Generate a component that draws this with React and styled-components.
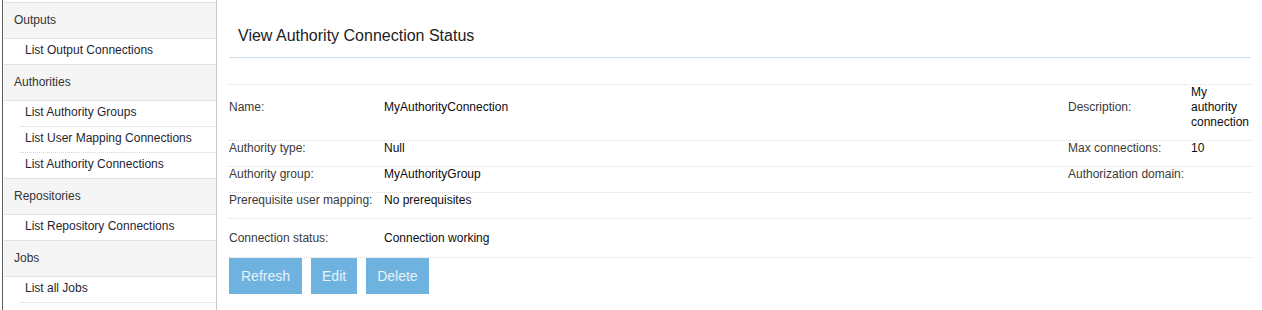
import React from "react";
import styled, { createGlobalStyle } from "styled-components";

const Global = createGlobalStyle`
  html, body { margin: 0; padding: 0; background: #fff; }
  body { font-family: "Liberation Sans", Arial, sans-serif; font-size: 12px; }
`;

const Page = styled.div`
  display: flex;
  align-items: stretch;
  min-height: 310px;
`;

const Sidebar = styled.nav`
  margin-left: 2px;
  width: 212px;
  flex: none;
  border-left: 1px solid #5a5a5a;
  border-right: 1px solid #c8c8c8;
  padding: 2px 0 0 1px;
  box-sizing: content-box;
`;

const NavHeader = styled.div`
  margin-top: -1px;
  background: #f5f5f5;
  border-top: 1px solid #e2e2e2;
  border-bottom: 1px solid #e2e2e2;
  padding: 10px 0 10px 10px;
  line-height: 15px;
  color: #333;
  &:first-child { margin-top: 0; }
`;

const NavItem = styled.div`
  margin-left: 16px;
  padding: 4px 0 6px 5px;
  line-height: 15px;
  color: #1f1f33;
  border-bottom: 1px dotted #d6d6d6;
`;

const Main = styled.main`
  flex: 1;
  padding: 0 11px 0 12px;
`;

const Title = styled.h1`
  margin: 0;
  padding: 26px 0 11px 9px;
  font-size: 16px;
  font-weight: normal;
  line-height: 20px;
  color: #222;
  border-bottom: 1px solid #cfe0f1;
`;

const Details = styled.div`
  margin-top: 26px;
`;

const Row = styled.div`
  display: grid;
  grid-template-columns: 155px 1fr 123px 60px;
  align-items: center;
  border-top: 1px dotted #dcdcdc;
  padding: ${(p) => (p.$status ? "12px 0 11px" : "0 0 10px")};
  border-bottom: ${(p) => (p.$status ? "1px dotted #dcdcdc" : "none")};
  line-height: 15px;
`;

const Label = styled.div`
  color: #3a3a3a;
  white-space: nowrap;
`;

const Value = styled.div`
  color: #0d0d0d;
`;

const Buttons = styled.div`
  display: flex;
  gap: 9px;
`;

const Button = styled.button`
  height: 36px;
  padding: 0 ${(p) => p.$pad}px;
  border: none;
  background: #6eb3e0;
  color: #e8f2fa;
  font-family: "Liberation Sans", Arial, sans-serif;
  font-size: 14px;
  cursor: pointer;
`;

const nav = [
  { title: "Outputs", items: ["List Output Connections"] },
  {
    title: "Authorities",
    items: [
      "List Authority Groups",
      "List User Mapping Connections",
      "List Authority Connections",
    ],
  },
  { title: "Repositories", items: ["List Repository Connections"] },
  { title: "Jobs", items: ["List all Jobs"] },
];

export default function App() {
  return (
    <>
      <Global />
      <Page>
        <Sidebar>
          {nav.map((g) => (
            <React.Fragment key={g.title}>
              <NavHeader>{g.title}</NavHeader>
              {g.items.map((it) => (
                <NavItem key={it}>{it}</NavItem>
              ))}
            </React.Fragment>
          ))}
        </Sidebar>
        <Main>
          <Title>View Authority Connection Status</Title>
          <Details>
            <Row>
              <Label>Name:</Label>
              <Value>MyAuthorityConnection</Value>
              <Label>Description:</Label>
              <Value>My authority connection</Value>
            </Row>
            <Row>
              <Label>Authority type:</Label>
              <Value>Null</Value>
              <Label>Max connections:</Label>
              <Value>10</Value>
            </Row>
            <Row>
              <Label>Authority group:</Label>
              <Value>MyAuthorityGroup</Value>
              <Label>Authorization domain:</Label>
              <Value></Value>
            </Row>
            <Row>
              <Label>Prerequisite user mapping:</Label>
              <Value>No prerequisites</Value>
              <div />
              <div />
            </Row>
            <Row $status>
              <Label>Connection status:</Label>
              <Value>Connection working</Value>
              <div />
              <div />
            </Row>
          </Details>
          <Buttons>
            <Button $pad={12}>Refresh</Button>
            <Button $pad={11}>Edit</Button>
            <Button $pad={11}>Delete</Button>
          </Buttons>
        </Main>
      </Page>
    </>
  );
}
